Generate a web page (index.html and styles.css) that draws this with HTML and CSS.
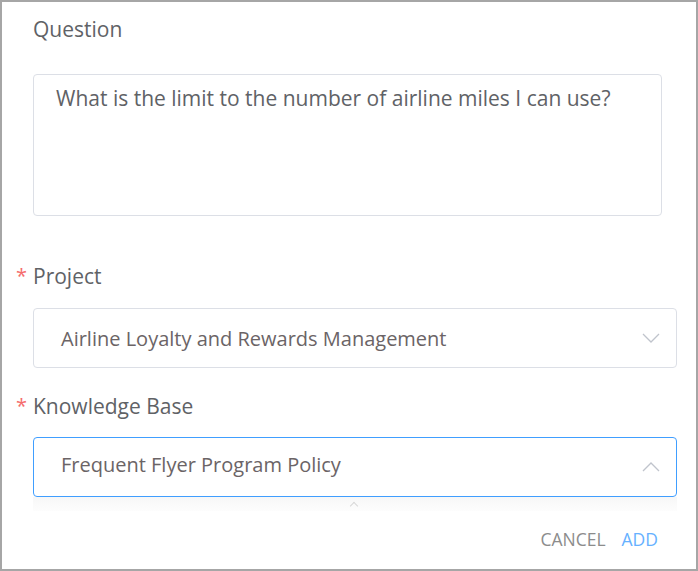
FILE: index.html
```html
<!DOCTYPE html>
<html lang="en">
<head>
  <meta charset="UTF-8" />
  <title>Add Question</title>
  <link rel="stylesheet" href="styles.css">
</head>
<body>
  <div class="dialog">
    <div class="form-item">
      <label class="label">Question</label>
      <div class="textarea">What is the limit to the number of airline miles I can use?</div>
    </div>

    <div class="form-item">
      <label class="label"><span class="req">*</span>Project</label>
      <div class="select">
        <span>Airline Loyalty and Rewards Management</span>
        <svg class="chevron" width="18" height="10" viewBox="0 0 18 10"><path d="M1 1 L9 9 L17 1" fill="none" stroke="#c0c4cc" stroke-width="1.3"/></svg>
      </div>
    </div>

    <div class="form-item">
      <label class="label"><span class="req">*</span>Knowledge Base</label>
      <div class="select focused">
        <span>Frequent Flyer Program Policy</span>
        <svg class="chevron" width="18" height="10" viewBox="0 0 18 10"><path d="M1 9 L9 1 L17 9" fill="none" stroke="#c0c4cc" stroke-width="1.3"/></svg>
      </div>
      <div class="dropdown"><span class="caret"></span></div>
    </div>

    <div class="footer">
      <button class="btn cancel">CANCEL</button>
      <button class="btn add">ADD</button>
    </div>
  </div>
</body>
</html>
```

FILE: styles.css
```css
body {
  margin: 0;
  font-family: "Open Sans", "Noto Sans", sans-serif;
  background: white;
}
.dialog {
  width: 698px;
  height: 571px;
  box-sizing: border-box;
  border: 2px solid #a6a6a6;
  padding: 0 19px 0 31px;
}
.form-item {
  display: flex;
  flex-direction: column;
}
.label {
  display: flex;
  align-items: center;
  font-size: 21px;
  line-height: 30px;
  color: #606266;
}
.req {
  color: #f56c6c;
  width: 17px;
  margin-left: -17px;
  font-size: 20px;
}
.form-item:nth-child(1) .label {
  margin-top: 12px;
}
.textarea {
  margin-top: 30px;
  width: 629px;
  height: 142px;
  box-sizing: border-box;
  border: 1px solid #dcdfe6;
  border-radius: 4px;
  padding: 9px 22px;
  font-size: 21px;
  line-height: 28px;
  color: #606266;
}
.form-item:nth-child(2) .label {
  margin-top: 45px;
}
.form-item:nth-child(3) .label {
  margin-top: 23px;
}
.select {
  margin-top: 17px;
  width: 644px;
  height: 60px;
  box-sizing: border-box;
  border: 1px solid #dcdfe6;
  border-radius: 4px;
  padding: 0 16px 0 27px;
  display: flex;
  align-items: center;
  justify-content: space-between;
  font-size: 20px;
  color: #6b6466;
}
.select.focused {
  margin-top: 16px;
  padding-bottom: 5px;
  border-color: #409eff;
}
.select.focused .chevron {
  margin-top: 5px;
}
.dropdown {
  position: relative;
  width: 644px;
  height: 14px;
  background: linear-gradient(#f7f7f7, #fdfdfd);
}
.caret {
  position: absolute;
  left: 318px;
  top: 6px;
  width: 5px;
  height: 5px;
  border-left: 1px solid #d8d8d8;
  border-top: 1px solid #d8d8d8;
  transform: rotate(45deg);
}
.footer {
  display: flex;
  justify-content: flex-end;
  gap: 16px;
  margin-top: 16px;
  padding-right: 19px;
}
.btn {
  border: none;
  background: none;
  padding: 0;
  font-family: "Open Sans", "Noto Sans", sans-serif;
  font-size: 17.5px;
  line-height: 24px;
  cursor: pointer;
}
.cancel {
  color: #8c8c8c;
}
.add {
  color: #66b1ff;
}
```
